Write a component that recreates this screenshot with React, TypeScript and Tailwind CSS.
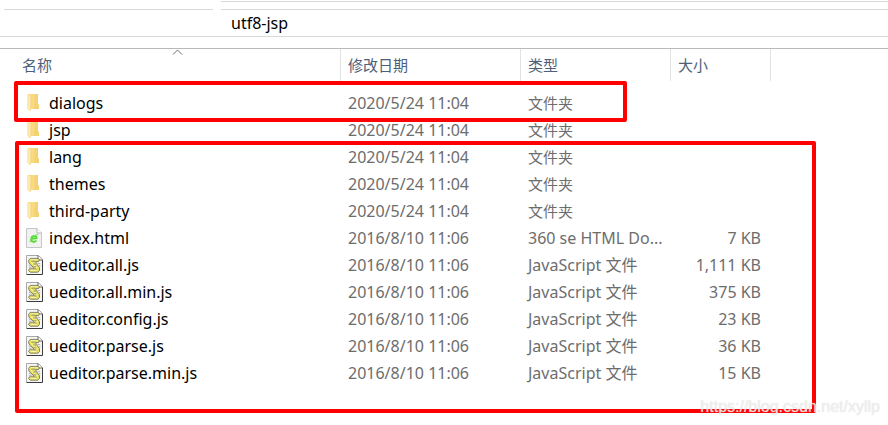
type Kind = "folder" | "html" | "js";

type Entry = { name: string; date: string; type: string; size?: string; kind: Kind };

const folderDate = "2020/5/24 11:04";
const fileDate = "2016/8/10 11:06";

const entries: Entry[] = [
  { name: "dialogs", date: folderDate, type: "文件夹", kind: "folder" },
  { name: "jsp", date: folderDate, type: "文件夹", kind: "folder" },
  { name: "lang", date: folderDate, type: "文件夹", kind: "folder" },
  { name: "themes", date: folderDate, type: "文件夹", kind: "folder" },
  { name: "third-party", date: folderDate, type: "文件夹", kind: "folder" },
  { name: "index.html", date: fileDate, type: "360 se HTML Do...", size: "7 KB", kind: "html" },
  { name: "ueditor.all.js", date: fileDate, type: "JavaScript 文件", size: "1,111 KB", kind: "js" },
  { name: "ueditor.all.min.js", date: fileDate, type: "JavaScript 文件", size: "375 KB", kind: "js" },
  { name: "ueditor.config.js", date: fileDate, type: "JavaScript 文件", size: "23 KB", kind: "js" },
  { name: "ueditor.parse.js", date: fileDate, type: "JavaScript 文件", size: "36 KB", kind: "js" },
  { name: "ueditor.parse.min.js", date: fileDate, type: "JavaScript 文件", size: "15 KB", kind: "js" },
];

function FolderIcon() {
  return (
    <svg width="18" height="20" viewBox="0 0 18 20" aria-hidden="true">
      <path d="M2 1H12V11L13 12V16H2Z" fill="#f8da83" />
      <path d="M9 1H12V11L13 12V16H8Z" fill="#f4d172" />
      <path d="M1 1L5 3V15L4 18L1 16Z" fill="#fee9aa" />
      <path d="M5 3V15L4 18" fill="none" stroke="#f0d07c" strokeWidth="0.7" />
    </svg>
  );
}

function HtmlIcon() {
  return (
    <svg width="18" height="20" viewBox="0 0 18 20" aria-hidden="true">
      <path d="M0.5 0.5H11L15.5 5V19.5H0.5Z" fill="#f1f1f1" stroke="#c6c6c6" />
      <path d="M11 0.5V5H15.5" fill="#ffffff" stroke="#b5b5b5" />
      <path d="M5.2 10.8L10.6 10.2C10.4 6.6 5.4 7.6 5.2 11.2C5.2 14.4 9 14.4 10.4 12.4" fill="none" stroke="#4bdc2c" strokeWidth="1.8" />
      <path d="M4.4 14.4C2.8 12.6 8.6 5.8 12.2 6.6" fill="none" stroke="#77e35d" strokeWidth="1" />
    </svg>
  );
}

function ScriptIcon() {
  return (
    <svg width="18" height="20" viewBox="0 0 18 20" aria-hidden="true">
      <path d="M0.5 0.5H12L16.5 5V19.5H0.5Z" fill="#f6f6f6" />
      <path d="M0.5 19V0.5H12" fill="none" stroke="#a8a8a8" />
      <path d="M12 0.5L16.5 5V19.5H0.5" fill="none" stroke="#3c3c3c" />
      <path d="M12 0.5V5H16.5" fill="#ffffff" stroke="#666666" />
      <path d="M4.2 3.4H12.2L13.4 4.8L12.6 6.6H9.6L10.4 8.6L13.4 12.4L13.6 15.4L11.8 17.2H4.2L2.6 15.6L3.4 13.8H8L7 12L3 8.2L2.6 5.4Z" fill="#e7e05a" stroke="#77775f" strokeWidth="0.9" strokeLinejoin="round" />
      <path d="M4.6 4.8H11.6M5 7.2L11.4 13.2M4.6 15.4H10.6" fill="none" stroke="#f7f5a8" strokeWidth="1.1" />
      <path d="M5.4 6.2H9.6M7.2 9H10M7.2 11.8H10.4M8 13.8L10.4 14.2" fill="none" stroke="#8d8d76" strokeWidth="0.9" />
      <path d="M2.8 10.2H5M2.8 12.2H6M11.4 8.6H14.2M12.6 10.6H14.4" fill="none" stroke="#a9a9a9" strokeWidth="0.9" />
    </svg>
  );
}

function FileIcon({ kind }: { kind: Kind }) {
  if (kind === "folder") return <FolderIcon />;
  if (kind === "html") return <HtmlIcon />;
  return <ScriptIcon />;
}

const columns = ["修改日期", "类型", "大小"];

export default function App() {
  return (
    <main className="relative min-h-screen w-full overflow-hidden bg-white font-['Noto_Sans','Noto_Sans_CJK_SC',sans-serif] text-base leading-5 text-[#6d6d6d]">
      <header className="border-b border-[#b9b9b9]">
        <div className="flex h-[10px] gap-2 pl-1 pt-px">
          <div className="w-[209px] border-b border-[#d9d9d9]" />
          <div className="flex-1 border-y border-[#d9d9d9]" />
        </div>
        <div className="flex h-[27px] items-center border-b border-[#d9d9d9] pl-[231px] text-black">
          utf8-jsp
        </div>
        <div className="h-[11px]" />
      </header>

      <table className="w-full table-fixed border-collapse">
        <colgroup>
          <col className="w-[340px]" />
          <col className="w-[180px]" />
          <col className="w-[150px]" />
          <col className="w-[100px]" />
          <col />
        </colgroup>
        <thead>
          <tr className="h-10 text-left align-top text-[15px] text-[#4c607a]">
            <th className="p-0 font-normal">
              <button type="button" className="relative flex h-8 w-full items-center pl-[22px]">
                名称
                <svg className="absolute left-[172px] top-0" width="11" height="7" viewBox="0 0 11 7" aria-hidden="true">
                  <path d="M1 5.5L5.5 1L10 5.5" fill="none" stroke="#6d6d6d" />
                </svg>
              </button>
            </th>
            {columns.map((label) => (
              <th key={label} className="p-0 font-normal">
                <button type="button" className="flex h-8 w-full items-center border-l border-[#e2e2e2] pl-[7px]">
                  {label}
                </button>
              </th>
            ))}
            <td className="p-0">
              <div className="h-8 border-l border-[#e2e2e2]" />
            </td>
          </tr>
        </thead>
        <tbody>
          {entries.map((entry) => (
            <tr key={entry.name} className="h-[27px] whitespace-nowrap">
              <td className="p-0 pl-[26px] text-black">
                <div className="flex items-center gap-[5px]">
                  <FileIcon kind={entry.kind} />
                  <span>{entry.name}</span>
                </div>
              </td>
              <td className="p-0 pl-2">{entry.date}</td>
              <td className={entry.kind === "folder" ? "p-0 pl-2 text-[15px]" : "p-0 pl-2"}>{entry.type}</td>
              <td className="p-0 pr-[9px] text-right">{entry.size}</td>
              <td className="p-0" />
            </tr>
          ))}
        </tbody>
      </table>

      <div className="pointer-events-none absolute left-[14px] top-[81px] h-[41px] w-[613px] rounded-xs border-4 border-[#ff0000]" />
      <div className="pointer-events-none absolute left-[15px] top-[141px] h-[272px] w-[801px] rounded-xs border-4 border-[#ff0000]" />
      <div className="pointer-events-none absolute right-2 top-[397px] font-['Liberation_Sans',sans-serif] text-base leading-5 text-white/60 [text-shadow:0_0_1px_#d0d0d0]">
        https://blog.csdn.net/xyllp
      </div>
    </main>
  );
}
